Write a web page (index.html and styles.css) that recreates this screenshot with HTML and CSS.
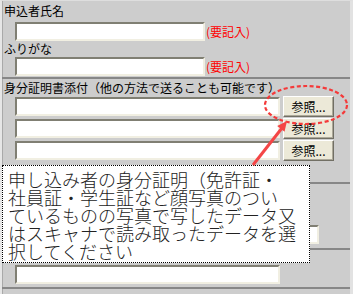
FILE: index.html
```html
<!DOCTYPE html>
<html lang="ja">
<head>
  <meta charset="UTF-8">
  <meta name="viewport" content="width=device-width, initial-scale=1.0">
  <title>申込フォーム</title>
  <link rel="stylesheet" href="styles.css">
</head>
<body>
  <div class="page">
    <div class="row row-name">
      <div class="label">申込者氏名</div>
      <div class="field">
        <input type="text" class="input input-short">
        <span class="required">(要記入)</span>
      </div>
      <div class="label label-kana">ふりがな</div>
      <div class="field">
        <input type="text" class="input input-short">
        <span class="required">(要記入)</span>
      </div>
    </div>

    <div class="row row-files">
      <div class="label">身分証明書添付（他の方法で送ることも可能です）</div>
      <div class="file-list">
        <div class="file-field">
          <input type="text" class="input input-file">
          <button class="browse-btn">参照...</button>
        </div>
        <div class="file-field">
          <input type="text" class="input input-file">
          <button class="browse-btn">参照...</button>
        </div>
        <div class="file-field">
          <input type="text" class="input input-file">
          <button class="browse-btn">参照...</button>
        </div>
      </div>
    </div>

    <div class="row row-wide">
      <div class="field">
        <input type="text" class="input input-wide">
      </div>
    </div>

    <div class="row row-last">
      <div class="field">
        <input type="text" class="input input-file">
      </div>
    </div>

    <div class="label label-cut">身分証明書番号</div>

    <div class="tooltip">
      申し込み者の身分証明（免許証・<br>
      社員証・学生証など顔写真のつい<br>
      ているものの写真で写したデータ又<br>
      はスキャナで読み取ったデータを選<br>
      択してください
    </div>

    <svg class="callout" width="353" height="294" viewBox="0 0 353 294">
      <ellipse cx="306" cy="105" rx="41" ry="19" fill="none" stroke="#f43a3a" stroke-width="2.2" stroke-dasharray="4 2.5"/>
      <line x1="253" y1="165" x2="282" y2="128" stroke="#f44646" stroke-width="3"/>
      <polygon points="287,121 284.5,131.8 277.2,126" fill="#f44646"/>
    </svg>
  </div>
</body>
</html>
```

FILE: styles.css
```css
body {
  margin: 0;
  padding: 0;
  background-color: #cdcdcd;
  font-family: 'Noto Sans CJK JP', 'Noto Sans', sans-serif;
  font-size: 12px;
  color: #000;
  overflow: hidden;
}
.page {
  position: relative;
  width: 353px;
  height: 294px;
  box-sizing: border-box;
  border-left: 2px solid #e6e6e6;
  border-right: 3px solid #e2e2e2;
  border-top: 1px solid #dedede;
  box-shadow: inset 1px 0 #a9a9a9;
  overflow: hidden;
}
.row {
  border-bottom: 2px solid #878787;
}
.label {
  height: 16px;
  line-height: 16px;
  padding-left: 2px;
  white-space: nowrap;
}
.row-name {
  padding: 2px 0 1px;
}
.row-name .field {
  margin-top: 3px;
}
.row-name .label-kana + .field {
  margin-top: 0;
}
.field {
  display: flex;
  align-items: center;
  padding-left: 13px;
  height: 19px;
}
.input {
  box-sizing: border-box;
  height: 19px;
  margin: 0;
  padding: 0 2px;
  background: #fff;
  border: 2px solid;
  border-color: #807f73 #f1efe2 #f1efe2 #807f73;
  font-family: inherit;
  font-size: 12px;
}
.input-short {
  width: 190px;
}
.input-file {
  width: 265px;
}
.input-wide {
  width: 304px;
}
.required {
  color: #ff0000;
  margin-left: 1px;
}
.row-files {
  padding: 1px 0 21px;
}
.file-list {
  display: flex;
  flex-direction: column;
  gap: 1px;
}
.file-field {
  display: flex;
  align-items: center;
  gap: 3px;
  padding-left: 13px;
  height: 21px;
}
.browse-btn {
  box-sizing: border-box;
  width: 51px;
  height: 21px;
  margin: 0;
  padding: 0;
  background-color: #ece9d8;
  border: 1px solid;
  border-color: #fff #716f64 #716f64 #fff;
  box-shadow: inset -1px -1px #aca899;
  font-family: inherit;
  font-size: 12px;
  color: #000;
}
.row-wide {
  padding: 41px 0 4px;
}
.row-last {
  padding: 15px 0 3px;
}
.label-cut {
  padding-top: 3px;
  color: #444;
}
.tooltip {
  position: absolute;
  left: 0;
  top: 164px;
  width: 308px;
  height: 98px;
  box-sizing: border-box;
  padding: 4px 5px 3px 5px;
  background: #fff;
  border: 1px dotted #000;
  font-size: 18px;
  font-weight: 300;
  line-height: 18px;
  white-space: nowrap;
  color: #222;
}
.callout {
  position: absolute;
  left: -2px;
  top: -1px;
  pointer-events: none;
}
```
